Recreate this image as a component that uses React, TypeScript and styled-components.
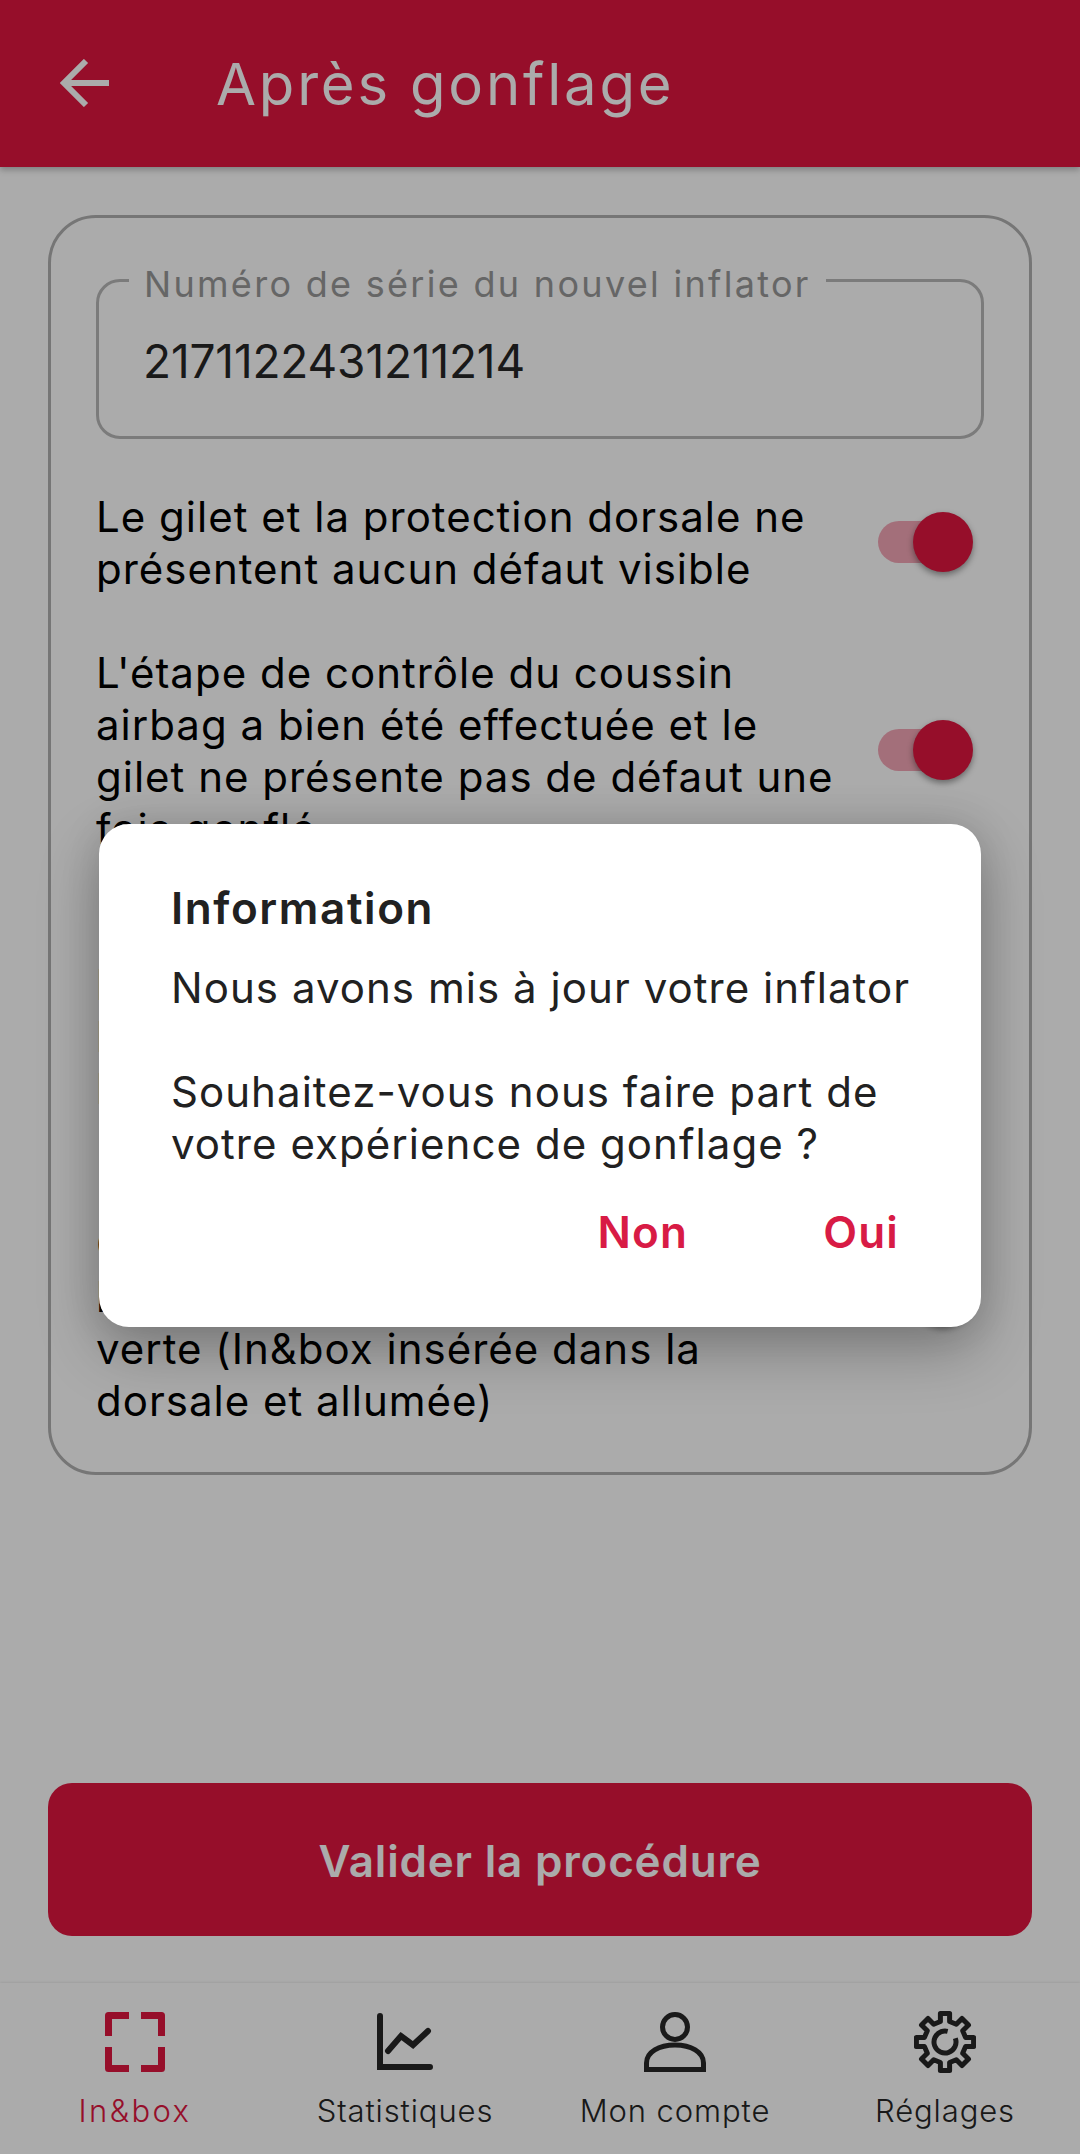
import { createGlobalStyle } from "styled-components";
import styled from "styled-components";

const GlobalStyle = createGlobalStyle`
    html, body {
        margin: 0;
        padding: 0;
    }
    body {
        font-family: Inter, "Noto Sans", sans-serif;
        background: #ffffff;
    }
    * {
        box-sizing: border-box;
    }
`;

const primary = "#e0163f";

const Page = styled.div`
    position: relative;
    display: flex;
    flex-direction: column;
    width: 1080px;
    height: 2154px;
    overflow: hidden;
    background: #ffffff;
`;
const Header = styled.header`
    display: flex;
    align-items: center;
    flex-shrink: 0;
    height: 167px;
    padding-left: 60px;
    background: ${primary};
    box-shadow: 0 3px 6px rgba(0, 0, 0, 0.25);
`;
const BackIcon = styled.svg`
    width: 49px;
    height: 48px;
    margin-top: -2px;
`;
const HeaderTitle = styled.h1`
    margin: 0 0 0 107px;
    font-size: 58px;
    font-weight: 400;
    letter-spacing: 2.8px;
    color: #ffffff;
`;
const Main = styled.main`
    display: flex;
    flex-direction: column;
    flex: 1;
    padding: 48px 48px 47px;
`;
const Card = styled.section`
    display: flex;
    flex-direction: column;
    gap: 52px;
    padding: 61px 45px 45px;
    border: 3px solid #b0b0b0;
    border-radius: 48px;
`;
const Field = styled.div`
    position: relative;
    height: 160px;
    padding: 51px 0 0 44px;
    border: 3px solid #b8b8b8;
    border-radius: 24px;
`;
const FieldLabel = styled.label`
    position: absolute;
    top: -19px;
    left: 30px;
    padding: 0 15px;
    font-size: 36px;
    line-height: 42px;
    letter-spacing: 2.3px;
    color: #989898;
    background: #ffffff;
`;
const FieldValue = styled.div`
    font-size: 46px;
    line-height: 56px;
    letter-spacing: -0.15px;
    color: #262626;
`;
const Row = styled.div`
    display: flex;
    align-items: center;
    justify-content: space-between;
`;
const RowText = styled.p`
    margin: 0;
    font-size: 42px;
    line-height: 52px;
    letter-spacing: 1px;
    color: #000000;
`;
const Toggle = styled.div`
    position: relative;
    flex-shrink: 0;
    width: 94px;
    height: 42px;
    margin: -3px 12px 0 0;
    border-radius: 21px;
    background: rgba(224, 22, 63, 0.38);
`;
const Thumb = styled.span`
    position: absolute;
    top: -9px;
    right: -1px;
    width: 60px;
    height: 60px;
    border-radius: 50%;
    background: ${primary};
    box-shadow: 0 3px 6px rgba(0, 0, 0, 0.4);
`;
const SubmitButton = styled.button`
    height: 153px;
    margin-top: auto;
    padding: 3px 0 0;
    border: 0;
    border-radius: 24px;
    font-family: inherit;
    font-size: 44px;
    font-weight: 600;
    letter-spacing: 0.8px;
    color: #ffffff;
    background: ${primary};
`;
const TabBar = styled.nav`
    display: grid;
    grid-template-columns: repeat(4, 270px);
    flex-shrink: 0;
    height: 171px;
    background: #ffffff;
    box-shadow: 0 -1px 2px rgba(0, 0, 0, 0.08);
`;
const Tab = styled.div<{ $active?: boolean }>`
    display: flex;
    flex-direction: column;
    align-items: center;
    color: ${(props) => (props.$active ? primary : "#262626")};
`;
const TabIcon = styled.div`
    display: flex;
    align-items: center;
    justify-content: center;
    height: 64px;
    margin-top: 27px;
`;
const TabLabel = styled.span<{ $wide?: boolean }>`
    margin-top: 17px;
    font-size: 31px;
    font-weight: 300;
    line-height: 40px;
    letter-spacing: ${(props) => (props.$wide ? "2.4px" : "0.9px")};
`;
const Overlay = styled.div`
    position: absolute;
    inset: 0;
    display: flex;
    align-items: center;
    justify-content: center;
    padding-bottom: 3px;
    background: rgba(0, 0, 0, 0.33);
`;
const Dialog = styled.div`
    display: flex;
    flex-direction: column;
    width: 882px;
    height: 503px;
    padding: 58px 72px 0;
    border-radius: 30px;
    background: #ffffff;
    box-shadow: 0 24px 60px rgba(0, 0, 0, 0.26), 0 0 40px rgba(0, 0, 0, 0.12);
`;
const DialogTitle = styled.h2`
    margin: 0;
    font-size: 44px;
    line-height: 52px;
    font-weight: 600;
    letter-spacing: 1.6px;
    color: #212121;
`;
const DialogText = styled.p`
    margin: 28px 0 0;
    font-size: 42px;
    line-height: 52px;
    letter-spacing: 1.05px;
    white-space: nowrap;
    color: #212121;
`;
const DialogActions = styled.div`
    display: flex;
    justify-content: flex-end;
    gap: 135px;
    margin-top: 36px;
    padding-right: 10px;
`;
const DialogAction = styled.button`
    padding: 0;
    border: 0;
    font-family: inherit;
    font-size: 44px;
    line-height: 52px;
    font-weight: 600;
    letter-spacing: 1.2px;
    color: #d81b45;
    background: none;
`;

// polar outline for the eight teeth of the settings cog
function gearPath(cx: number, cy: number, outer: number, inner: number) {
    const points: string[] = [];
    for (let i = 0; i < 8; i++) {
        const a = (i * Math.PI) / 4 - Math.PI / 2;
        const step = 0.16;
        const valley = 0.22;
        [
            [inner, a - valley],
            [outer, a - step],
            [outer, a + step],
            [inner, a + valley],
        ].forEach(([r, t]) => {
            points.push(`${(cx + r * Math.cos(t)).toFixed(1)} ${(cy + r * Math.sin(t)).toFixed(1)}`);
        });
    }
    return `M${points.join("L")}Z`;
}

const rows = [
    ["Le gilet et la protection dorsale ne", "présentent aucun défaut visible"],
    [
        "L'étape de contrôle du coussin",
        "airbag a bien été effectuée et le",
        "gilet ne présente pas de défaut une",
        "fois gonflé",
    ],
    [
        "Le nouvel inflator a bien été remis",
        "bien en place et la fermeture",
        "le gilet a été vérifié avant",
        "la reprise",
    ],
    [
        "Le voyant de l'In&box",
        "Contrôle du voyant lumineux",
        "l'In&box clignote en couleur",
        "verte (In&box insérée dans la",
        "dorsale et allumée)",
    ],
];

export default function App() {
    return (
        <Page>
            <GlobalStyle />
            <Header>
                <BackIcon viewBox="0 0 49 48" fill="none" stroke="#ffffff" strokeWidth="6">
                    <path d="M49 24H5" />
                    <path d="M26 2L4 24l22 22" />
                </BackIcon>
                <HeaderTitle>Après gonflage</HeaderTitle>
            </Header>
            <Main>
                <Card>
                    <Field>
                        <FieldLabel>Numéro de série du nouvel inflator</FieldLabel>
                        <FieldValue>2171122431211214</FieldValue>
                    </Field>
                    {rows.map((lines) => (
                        <Row key={lines[0]}>
                            <RowText>
                                {lines.map((line) => (
                                    <span key={line}>
                                        {line}
                                        <br />
                                    </span>
                                ))}
                            </RowText>
                            <Toggle>
                                <Thumb />
                            </Toggle>
                        </Row>
                    ))}
                </Card>
                <SubmitButton>Valider la procédure</SubmitButton>
            </Main>
            <TabBar>
                <Tab $active>
                    <TabIcon>
                        <svg width="60" height="60" viewBox="0 0 60 60" fill="none" stroke="currentColor" strokeWidth="7" strokeLinejoin="round">
                            <path d="M3.5 24V3.500H24" />
                            <path d="M36 3.500H56.500V24" />
                            <path d="M3.500 35V56.500H24" />
                            <path d="M36 56.500H56.500V35" />
                        </svg>
                    </TabIcon>
                    <TabLabel $wide>In&box</TabLabel>
                </Tab>
                <Tab>
                    <TabIcon>
                        <svg width="56" height="58" viewBox="0 0 56 58" fill="none" stroke="currentColor" strokeWidth="6" strokeLinecap="round">
                            <path d="M3 3V54H53" />
                            <path d="M11 38L24 23L36 32L51 18" />
                        </svg>
                    </TabIcon>
                    <TabLabel>Statistiques</TabLabel>
                </Tab>
                <Tab>
                    <TabIcon>
                        <svg width="62" height="60" viewBox="0 0 62 60" fill="none" stroke="currentColor" strokeWidth="5">
                            <circle cx="31" cy="15" r="12.500" />
                            <path d="M2.500 57.500V51C2.500 40 15 33 31 33S59.500 40 59.500 51V57.500Z" />
                        </svg>
                    </TabIcon>
                    <TabLabel>Mon compte</TabLabel>
                </Tab>
                <Tab>
                    <TabIcon>
                        <svg width="62" height="64" viewBox="0 0 62 64" fill="none" stroke="currentColor" strokeWidth="5" strokeLinejoin="round">
                            <path d={gearPath(31, 32, 29, 21)} />
                            <circle cx="31" cy="32" r="11" strokeDasharray="58 11" transform="rotate(-20 31 32)" />
                        </svg>
                    </TabIcon>
                    <TabLabel>Réglages</TabLabel>
                </Tab>
            </TabBar>
            <Overlay>
                <Dialog>
                    <DialogTitle>Information</DialogTitle>
                    <DialogText>
                        Nous avons mis à jour votre inflator
                        <br />
                        <br />
                        Souhaitez-vous nous faire part de
                        <br />
                        votre expérience de gonflage ?
                    </DialogText>
                    <DialogActions>
                        <DialogAction>Non</DialogAction>
                        <DialogAction>Oui</DialogAction>
                    </DialogActions>
                </Dialog>
            </Overlay>
        </Page>
    );
}
